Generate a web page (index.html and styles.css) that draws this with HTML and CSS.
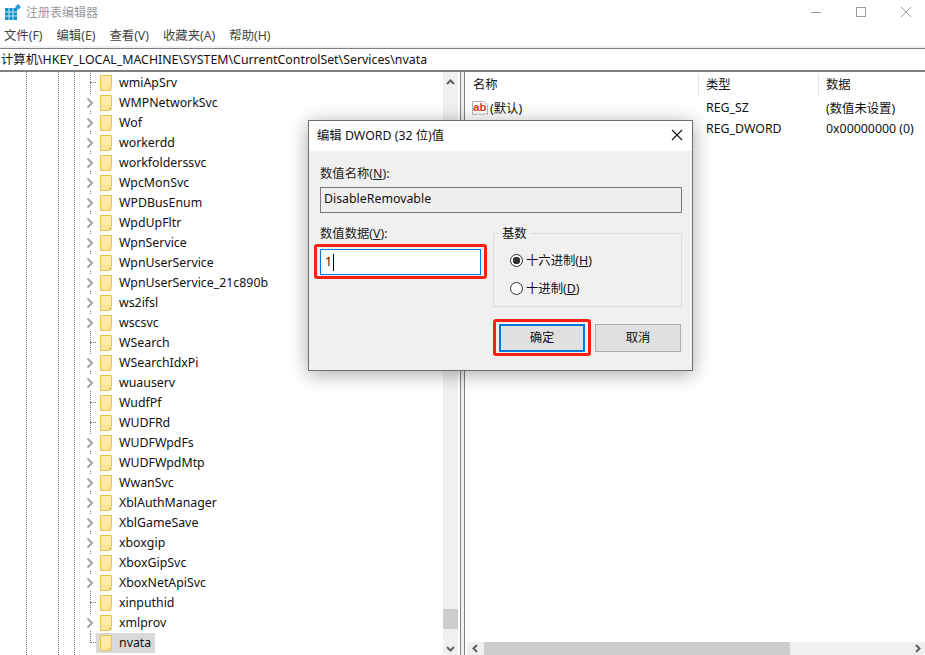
FILE: index.html

```html
<!DOCTYPE html>
<html lang="zh-CN">
<head>
  <meta charset="UTF-8" />
  <title>注册表编辑器</title>
  <link rel="stylesheet" href="styles.css">
</head>
<body>

  <svg width="0" height="0" class="defs">
    <symbol id="folder" viewBox="0 0 12 16">
      <path d="M.5.5h11v10.500l-3 4.500h-8z" fill="#fee79b" stroke="#eac24f"/>
      <path d="M11.500 11v4.500h-3z" fill="#eac24f"/>
      <path d="M1.500 1.500h9v8h-9z" fill="#fff0b8" opacity=".6"/>
    </symbol>
    <symbol id="chevron" viewBox="0 0 12 12">
      <path d="M3.500 1.500 8 6l-4.500 4.500" fill="none" stroke="#a6a6a6" stroke-width="2"/>
    </symbol>
  </svg>

  <div class="titlebar">
    <svg class="app-icon" width="16" height="16" viewBox="0 0 16 16">
      <path d="M0 4h12v12H0z" fill="#0f8fd0"/>
      <path d="M4 4v12M8 4v12M0 8h12M0 12h12" stroke="#c8e8f6" stroke-width="1"/>
      <path d="M13 0l3 3-3 3-3-3z" fill="#2a9ad8"/>
    </svg>
    <span class="app-title">注册表编辑器</span>
    <div class="win-buttons">
      <svg width="10" height="10" viewBox="0 0 10 10"><path d="M0 5.500h10" stroke="#999"/></svg>
      <svg width="10" height="10" viewBox="0 0 10 10"><path d="M.5.500h9v9h-9z" fill="none" stroke="#999"/></svg>
      <svg width="10" height="10" viewBox="0 0 10 10"><path d="M0 0l10 10M10 0L0 10" stroke="#999"/></svg>
    </div>
  </div>

  <div class="menubar">
    <span>文件(F)</span>
    <span>编辑(E)</span>
    <span>查看(V)</span>
    <span>收藏夹(A)</span>
    <span>帮助(H)</span>
  </div>

  <div class="addressbar">计算机\HKEY_LOCAL_MACHINE\SYSTEM\CurrentControlSet\Services\nvata</div>

  <div class="panes">
    <div class="tree">
      <div class="row"><i class="elbow"></i><svg class="folder"><use href="#folder"/></svg><span>wmiApSrv</span></div>
      <div class="row"><svg class="chev"><use href="#chevron"/></svg><svg class="folder"><use href="#folder"/></svg><span>WMPNetworkSvc</span></div>
      <div class="row"><svg class="chev"><use href="#chevron"/></svg><svg class="folder"><use href="#folder"/></svg><span>Wof</span></div>
      <div class="row"><svg class="chev"><use href="#chevron"/></svg><svg class="folder"><use href="#folder"/></svg><span>workerdd</span></div>
      <div class="row"><svg class="chev"><use href="#chevron"/></svg><svg class="folder"><use href="#folder"/></svg><span>workfolderssvc</span></div>
      <div class="row"><svg class="chev"><use href="#chevron"/></svg><svg class="folder"><use href="#folder"/></svg><span>WpcMonSvc</span></div>
      <div class="row"><svg class="chev"><use href="#chevron"/></svg><svg class="folder"><use href="#folder"/></svg><span>WPDBusEnum</span></div>
      <div class="row"><svg class="chev"><use href="#chevron"/></svg><svg class="folder"><use href="#folder"/></svg><span>WpdUpFltr</span></div>
      <div class="row"><svg class="chev"><use href="#chevron"/></svg><svg class="folder"><use href="#folder"/></svg><span>WpnService</span></div>
      <div class="row"><svg class="chev"><use href="#chevron"/></svg><svg class="folder"><use href="#folder"/></svg><span>WpnUserService</span></div>
      <div class="row"><svg class="chev"><use href="#chevron"/></svg><svg class="folder"><use href="#folder"/></svg><span>WpnUserService_21c890b</span></div>
      <div class="row"><svg class="chev"><use href="#chevron"/></svg><svg class="folder"><use href="#folder"/></svg><span>ws2ifsl</span></div>
      <div class="row"><svg class="chev"><use href="#chevron"/></svg><svg class="folder"><use href="#folder"/></svg><span>wscsvc</span></div>
      <div class="row"><i class="elbow"></i><svg class="folder"><use href="#folder"/></svg><span>WSearch</span></div>
      <div class="row"><svg class="chev"><use href="#chevron"/></svg><svg class="folder"><use href="#folder"/></svg><span>WSearchIdxPi</span></div>
      <div class="row"><svg class="chev"><use href="#chevron"/></svg><svg class="folder"><use href="#folder"/></svg><span>wuauserv</span></div>
      <div class="row"><i class="elbow"></i><svg class="folder"><use href="#folder"/></svg><span>WudfPf</span></div>
      <div class="row"><i class="elbow"></i><svg class="folder"><use href="#folder"/></svg><span>WUDFRd</span></div>
      <div class="row"><svg class="chev"><use href="#chevron"/></svg><svg class="folder"><use href="#folder"/></svg><span>WUDFWpdFs</span></div>
      <div class="row"><svg class="chev"><use href="#chevron"/></svg><svg class="folder"><use href="#folder"/></svg><span>WUDFWpdMtp</span></div>
      <div class="row"><svg class="chev"><use href="#chevron"/></svg><svg class="folder"><use href="#folder"/></svg><span>WwanSvc</span></div>
      <div class="row"><svg class="chev"><use href="#chevron"/></svg><svg class="folder"><use href="#folder"/></svg><span>XblAuthManager</span></div>
      <div class="row"><svg class="chev"><use href="#chevron"/></svg><svg class="folder"><use href="#folder"/></svg><span>XblGameSave</span></div>
      <div class="row"><svg class="chev"><use href="#chevron"/></svg><svg class="folder"><use href="#folder"/></svg><span>xboxgip</span></div>
      <div class="row"><svg class="chev"><use href="#chevron"/></svg><svg class="folder"><use href="#folder"/></svg><span>XboxGipSvc</span></div>
      <div class="row"><svg class="chev"><use href="#chevron"/></svg><svg class="folder"><use href="#folder"/></svg><span>XboxNetApiSvc</span></div>
      <div class="row"><i class="elbow"></i><svg class="folder"><use href="#folder"/></svg><span>xinputhid</span></div>
      <div class="row"><svg class="chev"><use href="#chevron"/></svg><svg class="folder"><use href="#folder"/></svg><span>xmlprov</span></div>
      <div class="row last"><i class="elbow"></i><div class="selected"><svg class="folder"><use href="#folder"/></svg><span>nvata</span></div></div>
    </div>

    <div class="vscroll">
      <svg width="15" height="20" viewBox="0 0 15 20"><path d="M4 12l3.500-3.500L11 12" fill="none" stroke="#606060" stroke-width="2"/></svg>
      <div class="vthumb"></div>
      <svg width="15" height="13" viewBox="0 0 15 13"><path d="M4 5l3.500 3.500L11 5" fill="none" stroke="#606060" stroke-width="2"/></svg>
    </div>

    <div class="splitter"></div>

    <div class="list">
      <div class="list-head">
        <div class="col col-name">名称</div>
        <div class="col col-type">类型</div>
        <div class="col col-data">数据</div>
      </div>
      <div class="list-row">
        <div class="col col-name">
          <svg class="val-icon" width="16" height="16" viewBox="0 0 16 16">
            <path d="M.5 1.500h11l4 3.500v9.500c-2-1.500-3-.5-5 0s-3-1-5-.5-3 1-5 .5z" fill="#fff" stroke="#b5b5b5"/>
            <text x="1" y="11" class="ab-text">ab</text>
          </svg>
          (默认)
        </div>
        <div class="col col-type">REG_SZ</div>
        <div class="col col-data">(数值未设置)</div>
      </div>
      <div class="list-row">
        <div class="col col-name">
          <svg class="val-icon" width="16" height="16" viewBox="0 0 16 16"><path d="M0 0h12v16H0z" fill="#2f7fb8"/></svg>
        </div>
        <div class="col col-type">REG_DWORD</div>
        <div class="col col-data">0x00000000 (0)</div>
      </div>
      <div class="hscroll">
        <svg width="17" height="13" viewBox="0 0 17 13"><path d="M10 3L6.500 6.500 10 10" fill="none" stroke="#606060" stroke-width="2"/></svg>
        <div class="hthumb"></div>
        <svg class="harrow-right" width="15" height="13" viewBox="0 0 15 13"><path d="M6 3l3.500 3.500L6 10" fill="none" stroke="#606060" stroke-width="2"/></svg>
      </div>
    </div>
  </div>

  <div class="dialog">
    <div class="dialog-title">
      <span>编辑 DWORD (32 位)值</span>
      <svg width="12" height="12" viewBox="0 0 12 12"><path d="M1 1l10 10M11 1L1 11" stroke="#111" stroke-width="1.100"/></svg>
    </div>
    <div class="dialog-body">
      <div class="field-label">数值名称(<u>N</u>):</div>
      <div class="name-box">DisableRemovable</div>
      <div class="value-row">
        <div class="value-col">
          <div class="field-label">数值数据(<u>V</u>):</div>
          <div class="value-box">1<i class="caret"></i></div>
        </div>
        <fieldset class="base-group">
          <legend>基数</legend>
          <div class="radio-row"><i class="radio on"></i><span>十六进制(<u>H</u>)</span></div>
          <div class="radio-row"><i class="radio"></i><span>十进制(<u>D</u>)</span></div>
        </fieldset>
      </div>
      <div class="dialog-buttons">
        <div class="btn btn-default">确定</div>
        <div class="btn">取消</div>
      </div>
    </div>
    <div class="mark mark-input"></div>
    <div class="mark mark-ok"></div>
  </div>

</body>
</html>
```

FILE: styles.css

```css
html, body {
  margin: 0;
  height: 655px;
  overflow: hidden;
}

body {
  font-family: "Noto Sans", "Noto Sans CJK SC", sans-serif;
  font-size: 12.35px;
  color: #111;
  background-color: white;
  position: relative;
}

.defs {
  position: absolute;
}

.titlebar {
  height: 24px;
  display: flex;
  align-items: center;
  padding-left: 5px;
}

.app-title {
  margin-left: 5px;
  color: #999;
  font-size: 12px;
}

.win-buttons {
  margin-left: auto;
  display: flex;
  gap: 35px;
  padding-right: 14px;
}

.menubar {
  height: 22px;
  display: flex;
  align-items: center;
  gap: 14px;
  padding-left: 4px;
  color: #444;
  border-bottom: 2px solid #f0f0f0;
}

.addressbar {
  height: 21px;
  line-height: 21px;
  padding-left: 1px;
  border-top: 1px solid #808080;
  border-bottom: 2px solid #808080;
  white-space: nowrap;
}

.panes {
  display: flex;
  height: 583px;
}

.tree {
  width: 443px;
  padding-top: 1px;
  background-image:
    linear-gradient(#777 50%, transparent 50%),
    linear-gradient(#777 50%, transparent 50%),
    linear-gradient(#777 50%, transparent 50%);
  background-size: 1px 2px;
  background-repeat: repeat-y;
  background-position: 26px 0, 58px 0, 74px 0;
}

.row {
  height: 20px;
  display: flex;
  align-items: center;
  padding-left: 84px;
  white-space: nowrap;
  background-image: linear-gradient(#777 50%, transparent 50%);
  background-size: 1px 2px;
  background-repeat: repeat-y;
  background-position: 90px 0;
}

.row.last {
  background-image: none;
}

.chev {
  width: 12px;
  height: 16px;
  background-color: white;
  margin-right: 4px;
}

.elbow {
  width: 6px;
  height: 10px;
  margin: 0 4px 0 6px;
  align-self: flex-start;
  border-bottom: 1px dotted #777;
  box-sizing: border-box;
}

.row.last .elbow {
  width: 6px;
  margin-right: 0;
  border-left: 1px dotted #777;
}

.folder {
  width: 12px;
  height: 16px;
  flex: none;
}

.row span {
  margin-left: 7px;
  margin-bottom: 2px;
}

.selected {
  display: flex;
  align-items: center;
  height: 20px;
  padding: 0 4px;
  background-color: #d9d9d9;
}

.vscroll {
  width: 15px;
  background-color: #f0f0f0;
  display: flex;
  flex-direction: column;
}

.vthumb {
  width: 15px;
  height: 20px;
  margin-top: auto;
  margin-bottom: 13px;
  background-color: #cdcdcd;
}

.splitter {
  width: 3px;
  margin-left: 2px;
  border-left: 1px solid #808080;
  border-right: 1px solid #808080;
  background-color: #f0f0f0;
}

.list {
  flex: 1;
  display: flex;
  flex-direction: column;
  margin-left: 1px;
}

.list-head {
  display: flex;
  height: 25px;
  align-items: center;
}

.list-head .col {
  height: 22px;
  line-height: 22px;
  border-right: 1px solid #e5e5e5;
}

.list-head .col-data {
  border-right: none;
}

.list-row {
  display: flex;
  height: 21px;
  align-items: center;
}

.col {
  padding-left: 7px;
  box-sizing: border-box;
  white-space: nowrap;
}

.col-name {
  width: 233px;
  display: flex;
  align-items: center;
}

.col-type {
  width: 120px;
}

.col-data {
  flex: 1;
}

.val-icon {
  margin-right: 2px;
  margin-left: -1px;
}

.ab-text {
  font-family: "Liberation Sans", sans-serif;
  font-size: 11.5px;
  font-weight: bold;
  fill: #d8431d;
}

.hscroll {
  margin-top: auto;
  height: 13px;
  background-color: #f0f0f0;
  display: flex;
  margin-left: 1px;
}

.hthumb {
  width: 306px;
  height: 13px;
  background-color: #cdcdcd;
}

.harrow-right {
  margin-left: auto;
}

/* dialog floats over the window */
.dialog {
  position: absolute;
  left: 308px;
  top: 120px;
  width: 383px;
  height: 249px;
  border: 1px solid #6e6e6e;
  background-color: #f0f0f0;
  box-shadow: 0 3px 18px rgba(0,0,0,0.35);
}

.dialog-title {
  height: 30px;
  box-sizing: border-box;
  background-color: white;
  display: flex;
  align-items: center;
  justify-content: space-between;
  padding: 0 9px 2px 8px;
}

.dialog-body {
  padding: 14px 10px 0 11px;
}

.field-label {
  height: 16px;
  line-height: 18px;
  color: #222;
}

.name-box {
  height: 24px;
  line-height: 22px;
  margin-top: 6px;
  padding-left: 3px;
  border: 1px solid #7a7a7a;
  background-color: #efefef;
}

.value-row {
  display: flex;
  gap: 12px;
  margin-top: 12px;
}

.value-col {
  width: 161px;
}

.value-box {
  height: 24px;
  line-height: 24px;
  margin-top: 8px;
  padding-left: 4px;
  border: 1px solid #0078d7;
  background-color: white;
  display: flex;
  align-items: center;
}

.caret {
  width: 1px;
  height: 17px;
  margin-left: 1px;
  background-color: #000;
}

.base-group {
  flex: 1;
  margin: 0;
  height: 82px;
  box-sizing: border-box;
  padding: 5px 0 0 16px;
  border: 1px solid #dcdcdc;
}

.base-group legend {
  padding: 0 3px;
  margin-left: -11px;
  height: 16px;
  line-height: 18px;
}

.radio-row {
  height: 28px;
  display: flex;
  align-items: center;
  gap: 3px;
}

.radio {
  width: 13px;
  height: 13px;
  box-sizing: border-box;
  border: 1px solid #333;
  border-radius: 50%;
  background-color: white;
}

.radio.on {
  background: radial-gradient(circle, #333 0 3.5px, white 4px);
}

.dialog-buttons {
  display: flex;
  justify-content: flex-end;
  gap: 10px;
  margin-top: 17px;
  padding-right: 1px;
}

.btn {
  width: 86px;
  height: 28px;
  line-height: 26px;
  box-sizing: border-box;
  text-align: center;
  border: 1px solid #adadad;
  background-color: #e1e1e1;
}

.btn-default {
  border: 2px solid #0078d7;
  line-height: 24px;
}

/* red annotation boxes drawn on top of the screenshot */
.mark {
  position: absolute;
  box-sizing: border-box;
  border: 3.5px solid #fb2012;
  border-radius: 3px;
}

.mark-input {
  left: 5px;
  top: 123px;
  width: 173px;
  height: 35px;
}

.mark-ok {
  left: 184px;
  top: 198px;
  width: 98px;
  height: 37px;
}
```
